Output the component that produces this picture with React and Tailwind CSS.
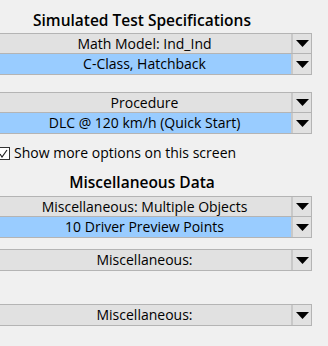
import React from "react";

const Arrow = () => (
  <svg width="13" height="7" viewBox="0 0 13 7" className="block">
    <polygon points="0,0 13,0 6.5,7" fill="#000" />
  </svg>
);

const Row = ({ label, selected, last }) => (
  <div className={`flex h-[20px] ${last ? "" : "border-b border-[#b4b4b4]"}`}>
    <div
      className={`flex-1 flex items-center justify-center text-[14px] leading-none text-black ${
        selected ? "bg-[#99ccff]" : "bg-[#e1e1e1]"
      }`}
    >
      {label}
    </div>
    <div className="w-[20px] bg-[#e1e1e1] border-l-2 border-[#c8c8c8] flex items-center justify-center">
      <Arrow />
    </div>
  </div>
);

const Group = ({ rows, className }) => (
  <div className={`border border-[#b4b4b4] ${className}`}>
    {rows.map((r, i) => (
      <Row key={i} label={r.label} selected={r.selected} last={i === rows.length - 1} />
    ))}
  </div>
);

const Heading = ({ children, className }) => (
  <div className={`w-[290px] text-center text-[15.5px] font-semibold text-black leading-none ${className}`}>
    {children}
  </div>
);

const App = () => {
  return (
    <div
      className="w-[328px] h-[346px] bg-[#f0f0f0] overflow-hidden"
      style={{ fontFamily: '"Open Sans", "Noto Sans", sans-serif' }}
    >
      <div className="ml-[-3px] w-[315px] flex flex-col">
        <Heading className="mt-[13px] h-[20px]">Simulated Test Specifications</Heading>
        <Group
          rows={[
            { label: "Math Model: Ind_Ind" },
            { label: "C-Class, Hatchback", selected: true },
          ]}
        />
        <Group
          className="mt-[17px]"
          rows={[
            { label: "Procedure" },
            { label: "DLC @ 120 km/h (Quick Start)", selected: true },
          ]}
        />
        <div className="mt-[12px] flex items-center gap-[4px] h-[14px]">
          <div className="w-[13px] h-[13px] border border-[#333] bg-white flex items-center justify-center">
            <svg width="9" height="9" viewBox="0 0 9 9">
              <polyline points="1,5 3,8 8,1" fill="none" stroke="#222" strokeWidth="1.2" />
            </svg>
          </div>
          <span className="text-[14px] leading-none text-black">Show more options on this screen</span>
        </div>
        <Heading className="mt-[15px] h-[21px]">Miscellaneous Data</Heading>
        <Group
          rows={[
            { label: "Miscellaneous: Multiple Objects" },
            { label: "10 Driver Preview Points", selected: true },
          ]}
        />
        <Group className="mt-[11px]" rows={[{ label: "Miscellaneous:" }]} />
        <Group className="mt-[33px]" rows={[{ label: "Miscellaneous:" }]} />
      </div>
    </div>
  );
};

export default App;
